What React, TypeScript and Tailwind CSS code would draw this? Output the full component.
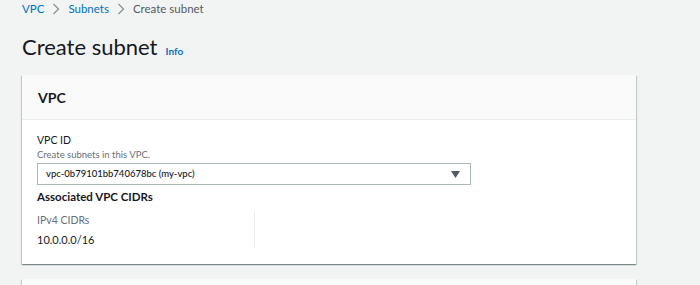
import React from "react";

function Chevron() {
  return (
    <svg width="8" height="12" viewBox="0 0 8 12" className="mx-[8px]">
      <path d="M1.5 1 L6.5 6 L1.5 11" fill="none" stroke="#879596" strokeWidth="1.3" />
    </svg>
  );
}

const cardShadow =
  "shadow-[0_1px_1px_0_rgba(0,28,36,0.3),1px_1px_1px_0_rgba(0,28,36,0.15),-1px_1px_1px_0_rgba(0,28,36,0.15)]";

export default function App() {
  return (
    <div
      className="h-screen bg-[#f2f3f3] pl-[22px] text-[#16191f] overflow-hidden"
      style={{ fontFamily: 'Lato, "Open Sans", Arial, sans-serif' }}
    >
      <nav className="flex items-center h-[18px] text-[11.5px]">
        <span className="text-[#0073bb]">VPC</span>
        <Chevron />
        <span className="text-[#0073bb]">Subnets</span>
        <Chevron />
        <span className="text-[#545b64]">Create subnet</span>
      </nav>

      <div className="flex items-baseline mt-[15px] h-[28px]">
        <h1 className="text-[22px] leading-[28px] font-normal">Create subnet</h1>
        <span className="ml-[8px] text-[10px] font-bold text-[#0073bb]">Info</span>
      </div>

      <div className={`mt-[14px] w-[614px] bg-white ${cardShadow}`}>
        <div className="h-[45px] flex items-center px-[16px] bg-[#fafafa] border-b border-[#eaeded]">
          <h2 className="text-[14px] font-bold">VPC</h2>
        </div>
        <div className="px-[15px] pt-[12px] pb-[16px]">
          <div className="text-[10.5px] leading-[16px]">VPC ID</div>
          <div className="text-[9.5px] leading-[14px] text-[#687078]">Create subnets in this VPC.</div>
          <div className="mt-[1px] w-[434px] h-[22px] border border-[#aab7b8] flex items-center justify-between pl-[8px] pr-[10px]">
            <span className="text-[9.5px] font-medium">vpc-0b79101bb740678bc (my-vpc)</span>
            <svg width="9" height="7" viewBox="0 0 9 7">
              <path d="M0 0 H9 L4.5 7 Z" fill="#545b64" />
            </svg>
          </div>
          <div className="mt-[3px] text-[11.5px] font-bold leading-[18px]">Associated VPC CIDRs</div>
          <div className="mt-[6px] flex">
            <div className="w-[218px] h-[36px] border-r border-[#eaeded]">
              <div className="text-[10.5px] leading-[16px] text-[#687078]">IPv4 CIDRs</div>
              <div className="mt-[4px] text-[11px] leading-[16px]">10.0.0.0/16</div>
            </div>
          </div>
        </div>
      </div>

      <div className={`mt-[15px] w-[614px] h-[40px] bg-[#fafafa] ${cardShadow}`} />
    </div>
  );
}
